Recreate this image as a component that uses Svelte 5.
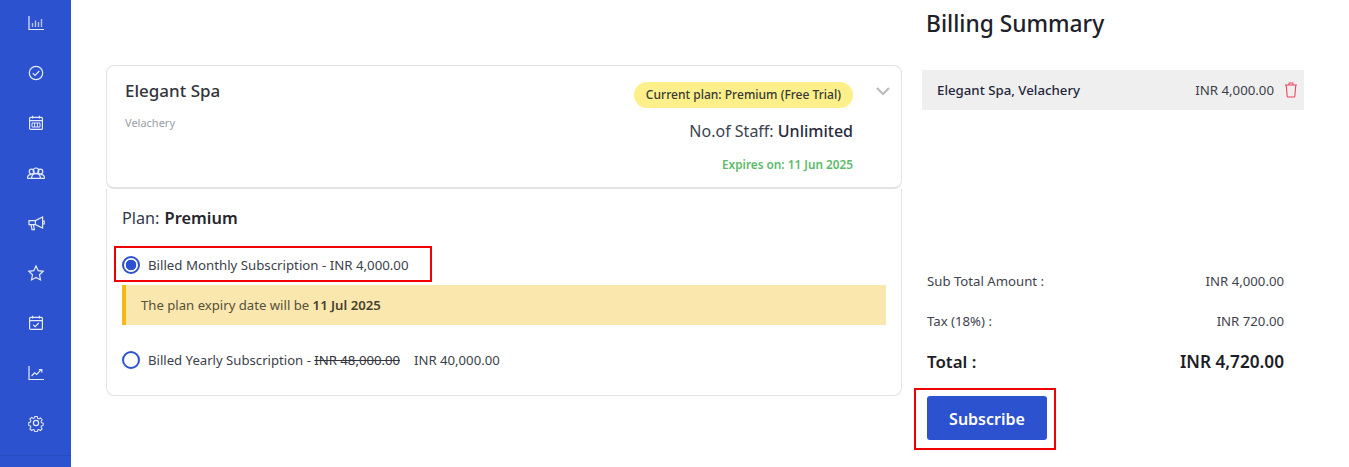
<script>
  const navIcons = ['chart', 'check', 'calendar', 'team', 'megaphone', 'star', 'task', 'trend', 'gear'];
</script>

{#snippet icon(name)}
  <svg width="18" height="18" viewBox="0 0 18 18" fill="none" stroke="currentColor" stroke-width="1.2">
    {#if name === 'chart'}
      <path d="M2 2v13.5h15" />
      <path d="M5.5 13v-4M8.5 13V6.5M11.5 13V8M14.5 13V5" stroke-width="1.4" opacity="0.75" />
    {:else if name === 'check'}
      <circle cx="9" cy="9" r="6.7" />
      <path d="M5.8 9.2l2.2 2.2 4.3-4.4" />
    {:else if name === 'calendar'}
      <rect x="2.6" y="3.4" width="12.8" height="12" rx="1" />
      <path d="M2.6 6.6h12.8M5.6 1.8v2.6M12.4 1.8v2.6" />
      <path d="M5 9h8v4H5zM7.6 9v4M10.4 9v4" stroke-width="1" />
    {:else if name === 'team'}
      <circle cx="4.6" cy="7.6" r="2.4" />
      <circle cx="13.4" cy="7.6" r="2.4" />
      <circle cx="9" cy="6.8" r="2.8" />
      <path d="M.4 14.4c0-2.6 1.8-4 4.2-4M17.6 14.4c0-2.6-1.8-4-4.2-4M4.6 14.4c0-3 1.8-4.8 4.4-4.8s4.4 1.8 4.4 4.8M.4 14.4h17.2" />
    {:else if name === 'megaphone'}
      <path d="M2 6.6h6.4L15.6 3v11L8.4 10.6H2z" />
      <path d="M15.6 7h1.6v3h-1.6M4 10.6l1 5h2.4l-1-5M8.4 6.6v4" />
    {:else if name === 'star'}
      <path d="M9 2l2.2 4.7 5 .6-3.7 3.5 1 5.1L9 13.4l-4.5 2.5 1-5.1L1.8 7.3l5-.6z" />
    {:else if name === 'task'}
      <rect x="2.6" y="3.4" width="12.8" height="12" rx="1" />
      <path d="M2.6 6.6h12.8M5.6 1.8v2.6M12.4 1.8v2.6" />
      <path d="M6.2 10.8l2 1.8 3.6-3.6" />
    {:else if name === 'trend'}
      <path d="M2 2v13.5h15" />
      <path d="M4.6 12l3-3.2 2.2 1.6 3.8-4.2" />
      <path d="M11.8 5.6h3v3" />
    {:else if name === 'gear'}
      <path d="M7.6 1.8h2.8l.4 2.1 1.5.7 1.9-1.1 1.8 2-1.2 1.8.4 1.6 2 .6v2.6l-2 .6-.4 1.5 1.2 1.8-1.9 1.9-1.8-1.1-1.5.7-.4 2H7.6l-.4-2-1.5-.7-1.8 1.1-2-1.9 1.2-1.8-.5-1.5-2-.6V8.9l2-.6.5-1.6-1.2-1.8 2-2 1.8 1.1 1.5-.7z" transform="translate(1.2 .9) scale(.87)" />
      <circle cx="9" cy="9" r="2.6" />
    {/if}
  </svg>
{/snippet}

<div class="page">
  <aside class="sidebar">
    {#each navIcons as name}
      <div class="nav-item">{@render icon(name)}</div>
    {/each}
    <div class="sidebar-foot"></div>
  </aside>

  <main class="plans">
    <section class="card venue">
      <div class="venue-name">
        <h2>Elegant Spa</h2>
        <p class="area">Velachery</p>
      </div>
      <div class="venue-meta">
        <span class="pill">Current plan: Premium (Free Trial)</span>
        <p class="staff">No.of Staff: <strong>Unlimited</strong></p>
        <p class="expires">Expires on: 11 Jun 2025</p>
      </div>
      <svg class="chevron" width="16" height="10" viewBox="0 0 16 10" fill="none" stroke="#bcbcbc" stroke-width="2.2">
        <path d="M2 2l6 6 6-6" />
      </svg>
    </section>

    <section class="card plan">
      <h3>Plan: <strong>Premium</strong></h3>

      <div class="option selected">
        <span class="radio on"></span>
        <span>Billed Monthly Subscription - INR 4,000.00</span>
      </div>
      <div class="notice">The plan expiry date will be <strong>11 Jul 2025</strong></div>
      <div class="option yearly">
        <span class="radio"></span>
        <span>Billed Yearly Subscription - <s>INR 48,000.00</s><span class="offer">INR 40,000.00</span></span>
      </div>
    </section>
  </main>

  <aside class="summary">
    <h1>Billing Summary</h1>
    <div class="line-item">
      <span class="item-name">Elegant Spa, Velachery</span>
      <span class="item-price">INR 4,000.00</span>
      <svg width="14" height="16" viewBox="0 0 14 16" fill="none" stroke="#f0435e" stroke-width="1.1">
        <path d="M1 3h12M2.2 3l1 11.2c0 .5.4.8.9.8h5.8c.5 0 .9-.3.9-.8l1-11.2M4.8 3l.4-2h3.6l.4 2" />
      </svg>
    </div>

    <div class="totals">
      <div class="row"><span>Sub Total Amount :</span><span>INR 4,000.00</span></div>
      <div class="row"><span>Tax (18%) :</span><span>INR 720.00</span></div>
      <div class="row total"><span>Total :</span><span class="grand">INR 4,720.00</span></div>
    </div>

    <div class="cta">
      <button type="button">Subscribe</button>
    </div>
  </aside>
</div>

<style>
  :global(body) {
    margin: 0;
    background: #fff;
    overflow: hidden;
  }

  .page {
    display: flex;
    height: 467px;
    font-family: "Noto Sans", "Open Sans", sans-serif;
    color: #2b2f38;
  }

  h1, h2, h3, p { margin: 0; }

  .sidebar {
    position: relative;
    flex: 0 0 71px;
    box-sizing: border-box;
    background: #2d52cf;
    color: #e6ebfb;
    margin-top: -2px;
  }

  .nav-item {
    display: flex;
    justify-content: center;
    align-items: center;
    height: 50px;
  }

  .sidebar-foot {
    position: absolute;
    left: 0;
    right: 0;
    top: 457px;
    border-top: 1px solid #284abb;
  }

  .plans {
    flex: 0 0 796px;
    margin: 65px 0 0 35px;
  }

  .card {
    box-sizing: border-box;
    border: 1px solid #e3e3e3;
    background: #fff;
  }

  .venue {
    position: relative;
    display: flex;
    justify-content: space-between;
    height: 124px;
    padding: 12px 48px 0 18px;
    border-radius: 8px;
    border-bottom-width: 2px;
  }

  .venue h2 {
    font-size: 17px;
    line-height: 26px;
    font-weight: 500;
    color: #33343a;
  }

  .area {
    margin-top: 11px;
    font-size: 11px;
    line-height: 16px;
    color: #98a0a6;
  }

  .venue-meta {
    display: flex;
    flex-direction: column;
    align-items: flex-end;
    padding-top: 4px;
  }

  .pill {
    padding: 0 12px;
    height: 26px;
    line-height: 26px;
    border-radius: 13px;
    background: #fdf08a;
    font-size: 12.05px;
    font-weight: 500;
    color: #3a3a34;
  }

  .staff {
    margin-top: 11px;
    font-size: 16px;
    line-height: 24px;
    color: #3c4250;
  }

  .staff strong {
    font-weight: 500;
    color: #2a2c3c;
  }

  .expires {
    margin-top: 12px;
    font-size: 11.8px;
    line-height: 18px;
    font-weight: 600;
    color: #5cbb6b;
  }

  .chevron {
    position: absolute;
    right: 10px;
    top: 20px;
  }

  .plan {
    height: 207px;
    padding: 17px 15px 0 15px;
    border-top: 0;
    border-radius: 0 0 8px 8px;
  }

  .plan h3 {
    font-size: 16.2px;
    line-height: 24px;
    font-weight: 400;
    color: #33384a;
  }

  .plan h3 strong {
    margin-left: 1px;
    font-size: 16.4px;
    font-weight: 600;
    color: #24262c;
  }

  .option {
    position: relative;
    display: flex;
    align-items: center;
    gap: 8px;
    height: 20px;
    font-size: 13.25px;
    color: #3b3f4a;
  }

  .selected {
    margin-top: 25px;
  }

  /* red annotation frame from the screenshot */
  .selected::after {
    content: "";
    position: absolute;
    left: -8px;
    top: -9px;
    width: 314px;
    height: 32px;
    border: 2px solid #f00000;
  }

  .yearly {
    margin-top: 25px;
    font-size: 13.15px;
  }

  .radio {
    box-sizing: border-box;
    flex: none;
    width: 18px;
    height: 18px;
    border: 2px solid #2d52cf;
    border-radius: 50%;
    background: #fff;
  }

  .radio.on {
    background: radial-gradient(circle, #2d52cf 0 5px, #fff 5.6px);
  }

  s { color: #33353c; }

  .offer { margin-left: 14px; }

  .notice {
    box-sizing: border-box;
    height: 40px;
    margin-top: 10px;
    padding-left: 15px;
    line-height: 40px;
    background: #fae7ae;
    border-left: 4px solid #f4b916;
    font-size: 13.15px;
    color: #55503c;
  }

  .notice strong {
    font-weight: 600;
    color: #45412f;
  }

  .summary {
    flex: 0 0 382px;
    margin-left: 20px;
  }

  .summary h1 {
    padding: 8px 0 0 4px;
    font-size: 22.75px;
    line-height: 32px;
    font-weight: 500;
    color: #1d2129;
  }

  .line-item {
    display: flex;
    align-items: center;
    height: 40px;
    margin-top: 30px;
    padding: 0 6px 0 15px;
    background: #efefef;
    font-size: 13.25px;
  }

  .item-name {
    flex: 1;
    font-weight: 500;
    color: #23263a;
  }

  .item-price {
    margin-right: 10px;
    color: #3b3f4a;
  }

  .totals {
    margin: 161px 20px 0 5px;
    font-size: 13.2px;
  }

  .row {
    display: flex;
    justify-content: space-between;
    align-items: center;
    height: 20px;
    margin-bottom: 20px;
    color: #3f434c;
  }

  .row.total {
    height: 22px;
    margin-top: -1px;
    margin-bottom: 0;
    font-size: 16.9px;
    font-weight: 600;
    color: #1c1e26;
  }

  .grand { font-size: 17.2px; }

  .cta {
    position: relative;
    width: 120px;
    margin: 24px 0 0 5px;
  }

  /* red annotation frame from the screenshot */
  .cta::after {
    content: "";
    position: absolute;
    left: -13px;
    top: -8px;
    width: 138px;
    height: 58px;
    border: 2px solid #f00000;
    pointer-events: none;
  }

  button {
    display: block;
    width: 120px;
    height: 44px;
    padding: 2px 0 0;
    border: 0;
    border-radius: 3px;
    background: #2d52cf;
    color: #fff;
    font: 600 16px "Noto Sans", "Open Sans", sans-serif;
  }
</style>
